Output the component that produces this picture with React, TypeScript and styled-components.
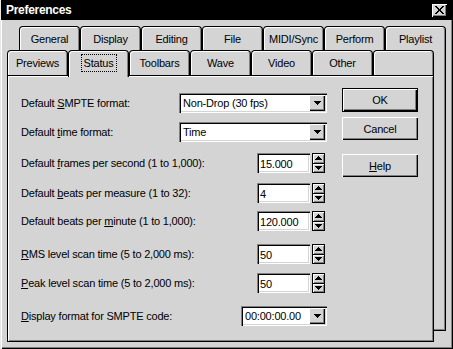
import React from 'react';
import styled, { createGlobalStyle } from 'styled-components';

const GREY = '#d4d4d4';

const Global = createGlobalStyle`
  html, body { margin: 0; padding: 0; background: ${GREY}; }
  body { font-family: "Liberation Sans", Arial, sans-serif; font-size: 11px; letter-spacing: -0.2px; color: #000; }
  * { box-sizing: border-box; }
`;

const Window = styled.div`
  width: 453px;
  height: 349px;
  background: ${GREY};
  padding: 0 1px 2px 1px;
  box-shadow: inset 1px 0 0 #e8e8e8, inset 2px 0 0 #fff, inset -1px -1px 0 #000, inset -2px -2px 0 #808080;
  display: flex;
  flex-direction: column;
`;

const TitleBar = styled.div`
  height: 20px;
  background: #000;
  color: #fff;
  display: flex;
  align-items: center;
  justify-content: space-between;
  padding: 0 5px 0 5px;
`;

const TitleText = styled.span`
  font-weight: bold;
  font-size: 12px;
  letter-spacing: -0.3px;
`;

const CloseButton = styled.div`
  width: 15px;
  height: 13px;
  background: ${GREY};
  box-shadow: inset 1px 1px 0 #fff, inset -1px -1px 0 #000, inset -2px -2px 0 #808080;
  display: flex;
  align-items: center;
  justify-content: center;
  padding-bottom: 1px;
`;

const Stage = styled.div`
  position: relative;
  margin: 6px 6px 0 6px;
  width: 439px;
`;

const BackPage = styled.div`
  position: absolute;
  left: 12px;
  right: 0;
  top: 24px;
  height: 281px;
  border-right: 1px solid #000;
  border-bottom: 1px solid #000;
  box-shadow: inset -1px -1px 0 #808080;
`;

const TabRow = styled.div<{ $offset?: number; $h: number }>`
  display: flex;
  align-items: flex-start;
  height: ${p => p.$h}px;
  margin-left: ${p => p.$offset ?? 0}px;
`;

const Tab = styled.div<{ $active?: boolean }>`
  width: 61px;
  height: ${p => (p.$active ? 'calc(100% + 2px)' : '100%')};
  border: 1px solid #000;
  border-bottom: none;
  border-radius: 4px 4px 0 0;
  background: ${GREY};
  box-shadow: inset 1px 1px 0 #fff, inset -1px 0 0 #808080;
  display: flex;
  align-items: center;
  justify-content: center;
  padding-bottom: ${p => (p.$active ? '2px' : '0')};
  position: relative;
  z-index: ${p => (p.$active ? 2 : 0)};
`;

const Focus = styled.span`
  outline: 1px dotted #000;
  padding: 2px 2px;
`;

const Front = styled.div`
  position: relative;
  z-index: 1;
  width: 427px;
`;

const Panel = styled.div`
  height: 267px;
  border: 1px solid #000;
  box-shadow: inset 1px 1px 0 #fff, inset -1px -1px 0 #808080;
  background: ${GREY};
  padding: 12px 15px 0 13px;
  display: flex;
  gap: 15px;
`;

const Form = styled.div`
  flex: 1;
  display: flex;
  flex-direction: column;
`;

const Row = styled.div<{ $mt: number }>`
  height: 20px;
  margin-top: ${p => p.$mt}px;
  display: flex;
  align-items: center;
  justify-content: space-between;
`;

const Label = styled.span`
  white-space: nowrap;
`;

const Combo = styled.div<{ $w: number }>`
  width: ${p => p.$w}px;
  height: 20px;
  background: #fff;
  box-shadow: inset 1px 1px 0 #808080, inset 2px 2px 0 #000, inset -1px -1px 0 #fff, inset -2px -2px 0 ${GREY};
  display: flex;
  align-items: center;
  justify-content: space-between;
  padding: 2px 2px 2px 4px;
`;

const DropButton = styled.div`
  width: 16px;
  height: 16px;
  background: ${GREY};
  box-shadow: inset 1px 1px 0 #fff, inset -1px -1px 0 #000, inset -2px -2px 0 #808080;
  display: flex;
  align-items: center;
  justify-content: center;
`;

const SpinGroup = styled.div`
  display: flex;
  gap: 2px;
  margin-right: 2px;
`;

const Edit = styled.div`
  width: 53px;
  height: 20px;
  background: #fff;
  box-shadow: inset 1px 1px 0 #808080, inset 2px 2px 0 #000, inset -1px -1px 0 #fff, inset -2px -2px 0 ${GREY};
  display: flex;
  align-items: center;
  padding: 2px 2px 1px 3px;
`;

const Spin = styled.div`
  width: 13px;
  height: 20px;
  border: 1px solid #000;
  background: #000;
  display: flex;
  flex-direction: column;
  gap: 1px;
`;

const SpinButton = styled.div`
  flex: 1;
  background: ${GREY};
  box-shadow: inset 1px 1px 0 #fff, inset -1px -1px 0 #808080;
  display: flex;
  align-items: center;
  justify-content: center;
`;

const Buttons = styled.div`
  width: 76px;
  display: flex;
  flex-direction: column;
`;

const Button = styled.div<{ $default?: boolean; $mt?: number }>`
  height: ${p => (p.$default ? 24 : 23)}px;
  margin-top: ${p => p.$mt ?? 0}px;
  background: ${GREY};
  display: flex;
  align-items: center;
  justify-content: center;
  border: ${p => (p.$default ? '1px solid #000' : 'none')};
  box-shadow: inset 1px 1px 0 #fff, inset -1px -1px 0 #000, inset -2px -2px 0 #808080;
`;

const Arrow = ({ up }: { up?: boolean }) => (
  <svg width="7" height="4" viewBox="0 0 7 4" shapeRendering="crispEdges">
    <path d={up ? 'M3 0h1v1h1v1h1v1h1v1H0V3h1V2h1V1h1z' : 'M0 0h7v1H6v1H5v1H4v1H3V3H2V2H1V1H0z'} fill="#000" />
  </svg>
);

const CloseIcon = () => (
  <svg width="9" height="8" viewBox="0 0 9 8" shapeRendering="crispEdges">
    <path
      d="M0 0h2v1h1v1h1v1h1V2h1V1h1V0h2v1H8v1H7v1H6v2h1v1h1v1h1v1H7V7H6V6H5V5H4v1H3v1H2v1H0V7h1V6h1V5h1V3H2V2H1V1H0z"
      fill="#000"
    />
  </svg>
);

type RowDef =
  | { label: React.ReactNode; kind: 'combo'; value: string; w: number; mt: number }
  | { label: React.ReactNode; kind: 'spin'; value: string; mt: number };

const rows: RowDef[] = [
  { label: <>Default <u>S</u>MPTE format:</>, kind: 'combo', value: 'Non-Drop (30 fps)', w: 148, mt: 5 },
  { label: <>Default <u>t</u>ime format:</>, kind: 'combo', value: 'Time', w: 148, mt: 9 },
  { label: <>Default <u>f</u>rames per second (1 to 1,000):</>, kind: 'spin', value: '15.000', mt: 11 },
  { label: <>Default <u>b</u>eats per measure (1 to 32):</>, kind: 'spin', value: '4', mt: 10 },
  { label: <>Default beats per <u>m</u>inute (1 to 1,000):</>, kind: 'spin', value: '120.000', mt: 8 },
  { label: <><u>R</u>MS level scan time (5 to 2,000 ms):</>, kind: 'spin', value: '50', mt: 13 },
  { label: <><u>P</u>eak level scan time (5 to 2,000 ms):</>, kind: 'spin', value: '50', mt: 9 },
  { label: <><u>D</u>isplay format for SMPTE code:</>, kind: 'combo', value: '00:00:00.00', w: 86, mt: 13 },
];

const backTabs = ['General', 'Display', 'Editing', 'File', 'MIDI/Sync', 'Perform', 'Playlist'];
const frontTabs = ['Previews', 'Status', 'Toolbars', 'Wave', 'Video', 'Other', ''];

export default function App() {
  return (
    <>
      <Global />
      <Window>
        <TitleBar>
          <TitleText>Preferences</TitleText>
          <CloseButton>
            <CloseIcon />
          </CloseButton>
        </TitleBar>
        <Stage>
          <TabRow $offset={12} $h={24}>
            {backTabs.map(t => (
              <Tab key={t}>{t}</Tab>
            ))}
          </TabRow>
          <BackPage />
          <Front>
            <TabRow $h={25}>
              {frontTabs.map((t, i) =>
                t === 'Status' ? (
                  <Tab key={i} $active>
                    <Focus>{t}</Focus>
                  </Tab>
                ) : (
                  <Tab key={i}>{t}</Tab>
                )
              )}
            </TabRow>
            <Panel>
              <Form>
                {rows.map((r, i) => (
                  <Row key={i} $mt={r.mt}>
                    <Label>{r.label}</Label>
                    {r.kind === 'combo' ? (
                      <Combo $w={r.w}>
                        <span>{r.value}</span>
                        <DropButton>
                          <Arrow />
                        </DropButton>
                      </Combo>
                    ) : (
                      <SpinGroup>
                        <Edit>{r.value}</Edit>
                        <Spin>
                          <SpinButton>
                            <Arrow up />
                          </SpinButton>
                          <SpinButton>
                            <Arrow />
                          </SpinButton>
                        </Spin>
                      </SpinGroup>
                    )}
                  </Row>
                ))}
              </Form>
              <Buttons>
                <Button $default>OK</Button>
                <Button $mt={5}>Cancel</Button>
                <Button $mt={14}>
                  <span>
                    <u>H</u>elp
                  </span>
                </Button>
              </Buttons>
            </Panel>
          </Front>
        </Stage>
      </Window>
    </>
  );
}
